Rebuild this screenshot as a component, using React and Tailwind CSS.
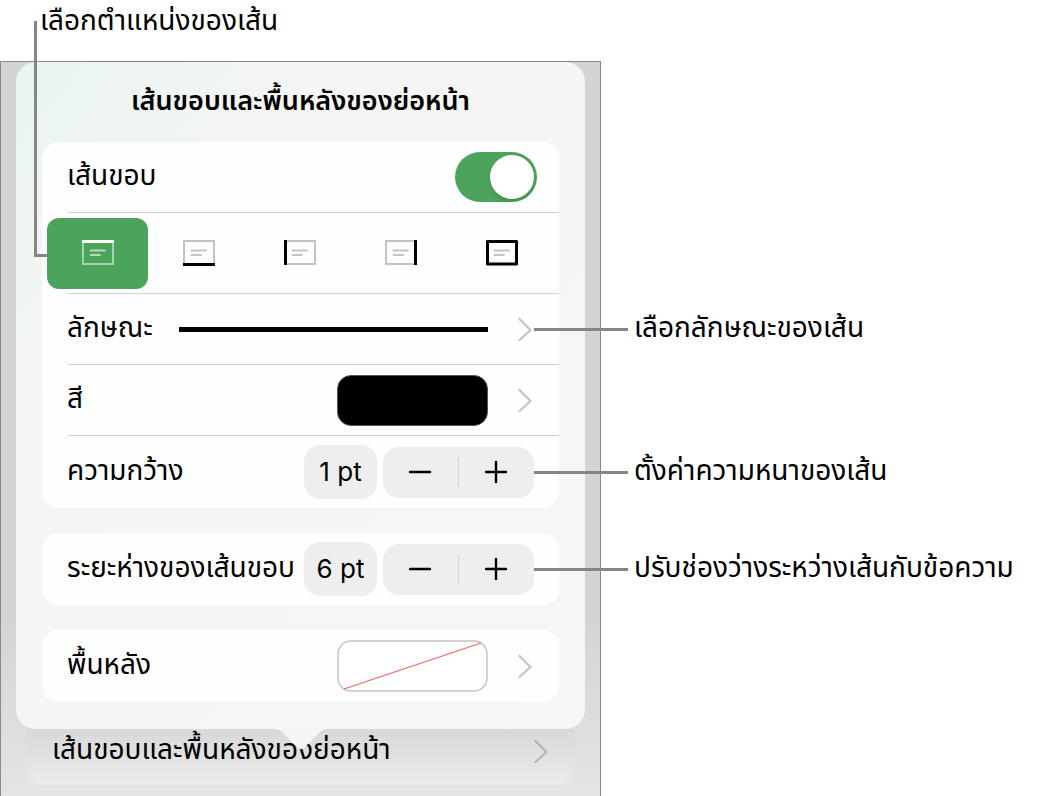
import { useState } from 'react';

const THAI = 'font-["Noto_Sans_Thai","Noto_Sans",sans-serif]';

const POSITIONS = [
    { id: 'top', label: 'เส้นด้านบน' },
    { id: 'bottom', label: 'เส้นด้านล่าง' },
    { id: 'left', label: 'เส้นด้านซ้าย' },
    { id: 'right', label: 'เส้นด้านขวา' },
    { id: 'all', label: 'เส้นทุกด้าน' },
];

const EDGES = {
    top: 'M1 2.5H33',
    bottom: 'M1 25.5H33',
    left: 'M2.5 1V26',
    right: 'M31.5 1V26',
    all: 'M2.5 2.5H31.5V25H2.5Z',
};

const PositionIcon = ({ edge, active }) => (
    <svg width="34" height="29" viewBox="0 0 34 29" fill="none">
        <rect x="2" y="2" width="30" height="23" stroke={active ? '#a3d3ad' : '#c3c3c3'} strokeWidth="2" />
        <path d="M9.5 11.5H24M9.5 16H19" stroke={active ? '#b6dcbe' : '#c3c3c3'} strokeWidth="1.8" strokeLinecap="round" />
        <path d={EDGES[edge]} stroke={active ? '#fff' : '#000'} strokeWidth="3" strokeLinejoin="round" />
    </svg>
);

const Chevron = ({ color = '#c4c4c6' }) => (
    <svg width="14" height="24" viewBox="0 0 14 24" fill="none" className="shrink-0">
        <path d="M1.5 2L12.5 13L1.5 23" stroke={color} strokeWidth="2.2" strokeLinecap="round" strokeLinejoin="round" />
    </svg>
);

const Divider = () => <div className="ml-[25px] h-px bg-[#d1d1d3]" />;

const Card = ({ children }) => <section className="rounded-2xl bg-[#fefefe]">{children}</section>;

// Leader line and its caption, hung off the right side of a row
const Callout = ({ children }) => (
    <div className="absolute top-1/2 left-full -ml-[25px] flex -translate-y-1/2 items-center gap-1.5 whitespace-nowrap">
        <span className="h-[3px] w-[94px] bg-[#858585]" />
        <span className="text-[28px] leading-8">{children}</span>
    </div>
);

const Stepper = ({ id, label, value, onChange, callout }) => (
    <div className="relative flex h-[72px] items-center gap-1.5 px-[25px]">
        <label htmlFor={id} className="flex-1 whitespace-nowrap">{label}</label>
        <output id={id} className='flex h-[54px] w-[73px] shrink-0 items-center justify-center rounded-2xl bg-[#eeeeef] font-["Inter",sans-serif] text-[26px]'>
            {value} pt
        </output>
        <div className="flex h-[51px] w-[151px] shrink-0 items-center rounded-2xl bg-[#eeeeee]">
            <button type="button" aria-label="ลด" className="flex h-full flex-1 items-center justify-center" onClick={() => onChange(Math.max(0, value - 1))}>
                <svg width="24" height="24" viewBox="0 0 24 24"><path d="M1 12H21" stroke="#000" strokeWidth="2.4" strokeLinecap="round" /></svg>
            </button>
            <span className="h-[29px] w-px bg-[#d3d3d5]" />
            <button type="button" aria-label="เพิ่ม" className="flex h-full flex-1 items-center justify-center" onClick={() => onChange(value + 1)}>
                <svg width="24" height="24" viewBox="0 0 24 24"><path d="M1 12H21M11 2V22" stroke="#000" strokeWidth="2.4" strokeLinecap="round" /></svg>
            </button>
        </div>
        <Callout>{callout}</Callout>
    </div>
);

export default function App() {
    const [enabled, setEnabled] = useState(true);
    const [position, setPosition] = useState('top');
    const [width, setWidth] = useState(1);
    const [offset, setOffset] = useState(6);

    return (
        <div className={`relative h-screen overflow-hidden bg-white text-[28px] leading-8 text-black ${THAI}`}>
            <p className="h-[61px] pt-1.5 pl-10">เลือกตำแหน่งของเส้น</p>

            <main className="h-full w-full max-w-[601px] border-x border-t border-[#8a8a8a] bg-linear-to-b from-[#d3d5d4] via-[#d3d5d3] via-70% to-[#e9eae9] px-[15px]">
                <div className="relative z-10 h-[667px] rounded-[20px] bg-[#f5f5f5] bg-linear-to-br from-[#e9f5ee] via-[#f5f5f5] via-30% to-[#f6f6f6] px-[26px]">
                    <h1 className="flex h-20 items-center justify-center text-[27px] font-semibold">เส้นขอบและพื้นหลังของย่อหน้า</h1>

                    <div className="flex flex-col gap-[25px]">
                        <Card>
                            <div className="flex h-[70px] items-center justify-between pr-[22px] pl-[25px]">
                                <label htmlFor="border-on">เส้นขอบ</label>
                                <input
                                    id="border-on"
                                    type="checkbox"
                                    role="switch"
                                    checked={enabled}
                                    onChange={(e) => setEnabled(e.target.checked)}
                                    className="flex h-[50px] w-[82px] appearance-none items-center rounded-full bg-[#e9e9ea] px-[3px] before:size-11 before:rounded-full before:bg-white before:shadow-md checked:justify-end checked:bg-[#4ca45c]"
                                />
                            </div>
                            <Divider />
                            <div className="grid h-20 grid-cols-5 items-center pr-[7px] pl-[5px]">
                                {POSITIONS.map(({ id, label }) => (
                                    <button
                                        key={id}
                                        type="button"
                                        aria-label={label}
                                        aria-pressed={position === id}
                                        onClick={() => setPosition(id)}
                                        className="flex h-[71px] items-center justify-center rounded-xl aria-pressed:bg-[#4ca45c]"
                                    >
                                        <PositionIcon edge={id} active={position === id} />
                                    </button>
                                ))}
                            </div>
                            <Divider />
                            <div className="relative">
                                <button type="button" className="flex h-[70px] w-full items-center pr-[27px] pl-[25px] text-left">
                                    <span className="w-28">ลักษณะ</span>
                                    <span className="mr-[30px] h-[5px] flex-1 bg-black" />
                                    <Chevron />
                                </button>
                                <Callout>เลือกลักษณะของเส้น</Callout>
                            </div>
                            <Divider />
                            <button type="button" className="flex h-[70px] w-full items-center pr-[27px] pl-[25px] text-left">
                                <span className="flex-1">สี</span>
                                <span className="mr-[30px] h-[51px] w-[151px] rounded-[14px] border border-[#555] bg-black" />
                                <Chevron />
                            </button>
                            <Divider />
                            <Stepper id="border-width" label="ความกว้าง" value={width} onChange={setWidth} callout="ตั้งค่าความหนาของเส้น" />
                        </Card>

                        <Card>
                            <Stepper id="border-offset" label="ระยะห่างของเส้นขอบ" value={offset} onChange={setOffset} callout="ปรับช่องว่างระหว่างเส้นกับข้อความ" />
                        </Card>

                        <Card>
                            <button type="button" className="flex h-[72px] w-full items-center pr-[27px] pl-[25px] text-left">
                                <span className="flex-1">พื้นหลัง</span>
                                <svg width="151" height="52" viewBox="0 0 151 52" fill="none" className="mr-[30px]">
                                    <rect x="1" y="1" width="149" height="50" rx="13" fill="#fff" stroke="#c4c4c4" strokeWidth="1.5" />
                                    <path d="M7 49L144 3" stroke="#ee6a62" strokeWidth="1.3" />
                                </svg>
                                <Chevron />
                            </button>
                        </Card>
                    </div>

                    {/* Popover arrow */}
                    <svg width="58" height="21" viewBox="0 0 58 21" className="absolute top-full left-1/2 -translate-x-1/2">
                        <path d="M0 0C7 0 9 2 13 6L25 18C28 21 30 21 33 18L45 6C49 2 51 0 58 0Z" fill="#f5f5f5" />
                    </svg>
                </div>

                <button type="button" className="flex w-full px-2.5 text-left">
                    <span className="flex h-14 flex-1 items-center justify-between rounded-b-2xl bg-linear-to-b from-[#d8d8d8] to-[#eaebea] pr-[27px] pb-3 pl-[26px]">
                        เส้นขอบและพื้นหลังของย่อหน้า
                        <Chevron color="#b4b5b5" />
                    </span>
                </button>
            </main>

            {/* Leader from the top caption down to the selected position */}
            <div className="absolute top-[21px] left-[34px] z-20 h-[236px] w-[13px] border-b-[3px] border-l-[3px] border-[#858585]" />
        </div>
    );
}
